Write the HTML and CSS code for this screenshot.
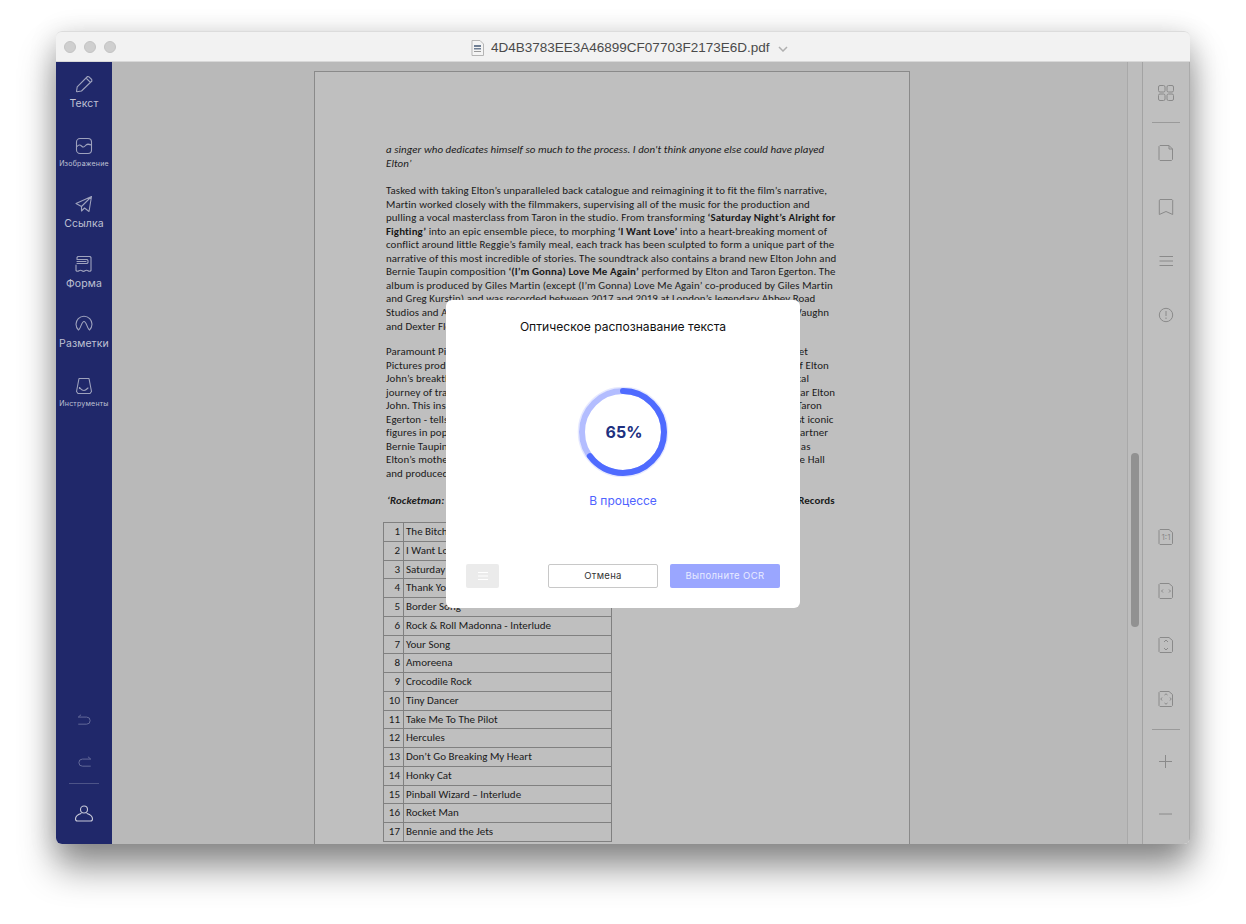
FILE: index.html
```html
<!DOCTYPE html>
<html lang="ru">
<head>
<meta charset="utf-8">
<title>OCR</title>
<link rel="stylesheet" href="styles.css">
</head>
<body>
<div class="window">
  <header class="titlebar">
    <div class="lights"><i></i><i></i><i></i></div>
    <div class="doc-title">
      <svg class="doc-icon" width="13" height="16" viewBox="0 0 13 16"><path d="M1 .5h8l3.500 3.500v11.500h-11.500z" fill="#f4f4f4" stroke="#b5b5b5"/><path d="M3 5h7v2h-7zM3 8h7v1.500h-7z" fill="#6f7f94"/><path d="M3 11h7v1h-7z" fill="#9a9a9a"/></svg>
      <span>4D4B3783EE3A46899CF07703F2173E6D.pdf</span>
      <svg class="chev" width="10" height="6" viewBox="0 0 10 6"><path d="M1 1l4 4 4-4" fill="none" stroke="#b0b0b0" stroke-width="1.500"/></svg>
    </div>
  </header>
  <div class="body">
    <nav class="sidebar">
      <div class="tools">
        <div class="tool"><svg width="20" height="20" viewBox="0 0 20 20"><path d="M2.500 17.500l.7-4.700L13.500 2.500l1.500.3 2.700 2.700.2 1.500L7.500 17l-4.500.7zM12 4l4.200 4.200" class="ic"/></svg><span>Текст</span></div>
        <div class="tool small"><svg width="20" height="20" viewBox="0 0 20 20"><rect x="2.500" y="2.500" width="15" height="15" rx="3.500" class="ic"/><path d="M2.500 11c2-2.500 3.500-2.500 5-1s2.500 1.500 4-.5 3-1.500 6-.5" class="ic"/></svg><span>Изображение</span></div>
        <div class="tool"><svg width="20" height="20" viewBox="0 0 20 20"><path d="M2 9.500L17.500 2.500 15 17.500 10.500 14 7.500 17V12.500zM7.500 12.500L17.500 2.500" class="ic"/></svg><span>Ссылка</span></div>
        <div class="tool"><svg width="20" height="20" viewBox="0 0 20 20"><path d="M3 5V3.500l1-1h12l1 1V16.500c-1 1-2 1-3 .3-1-.7-2-.7-3 0s-2 .7-3 0-2-.7-3 0-2 .7-3-.3V11M3 5.500h10l1 1v2l-1 1H3M3 7.500h9" class="ic"/></svg><span>Форма</span></div>
        <div class="tool"><svg width="20" height="20" viewBox="0 0 20 20"><path d="M4.500 16A8 8 0 1 1 15.500 16" class="ic"/><path d="M5 15.500c2-1.500 2.500-8 5-8s3 6.500 5 8" class="ic"/></svg><span>Разметки</span></div>
        <div class="tool small"><svg width="20" height="20" viewBox="0 0 20 20"><path d="M5 2.500h10l2.500 13-1.500 2H4l-1.500-2zM5.500 11.500c1.500 1.500 2 3 4.500 3 1.500 0 2.500-1 4-2.500M5.500 11.500v1" class="ic"/></svg><span>Инструменты</span></div>
      </div>
      <div class="side-bottom">
        <svg class="undo" width="15" height="12" viewBox="0 0 18 14"><path d="M4.500 1L1.500 3.500h10a3.500 3.500 0 0 1 0 8.500H2" class="ic dim"/></svg>
        <svg class="redo" width="15" height="12" viewBox="0 0 18 14"><path d="M13.500 1L16.500 3.500h-10a3.500 3.500 0 0 0 0 8.500H16" class="ic dim"/></svg>
        <hr class="side-rule">
        <svg class="user" width="20" height="20" viewBox="0 0 20 20"><circle cx="10" cy="5.500" r="3.500" class="ic bright"/><path d="M7 9.500c-3 1-5.500 3-5.500 5.500 0 1.500 1 2 2 2h13c1 0 2-.5 2-2 0-2.500-2.500-4.500-5.500-5.500" class="ic bright"/></svg>
      </div>
    </nav>
    <main class="viewer">
      <article class="page">
        <p class="it">a singer who dedicates himself so much to the process. I don't think anyone else could have played<br>Elton’</p>
        <p class="lead">Tasked with taking Elton’s unparalleled back catalogue and reimagining it to fit the film’s narrative,<br>Martin worked closely with the filmmakers, supervising all of the music for the production and<br>pulling a vocal masterclass from Taron in the studio. From transforming <b>‘Saturday Night’s Alright for<br>Fighting’</b> into an epic ensemble piece, to morphing <b>‘I Want Love’</b> into a heart-breaking moment of<br>conflict around little Reggie’s family meal, each track has been sculpted to form a unique part of the<br>narrative of this most incredible of stories. The soundtrack also contains a brand new Elton John and<br>Bernie Taupin composition <b>‘(I’m Gonna) Love Me Again’</b> performed by Elton and Taron Egerton. The<br>album is produced by Giles Martin (except (I’m Gonna) Love Me Again’ co-produced by Giles Martin<br>and Greg Kurstin) and was recorded between 2017 and 2019 at London’s legendary Abbey Road<br>Studios and AIR Studios with some additional orchestrations by Matt Dunkley and by Steve Vaughn<br>and Dexter Fletcher.</p>
        <p>Paramount Pictures presents, in association with New Regency Films, Marv Films and a Rocket<br>Pictures production, Rocketman is an epic musical fantasy on the uncensored human story of Elton<br>John’s breakthrough years, directed by Dexter Fletcher. The film follows the fantastical musical<br>journey of transformation from shy piano prodigy Reginald Dwight into international superstar Elton<br>John. This inspirational story, set to Elton John’s most beloved songs and performed by star Taron<br>Egerton - tells the astonishing story of how a small-town boy became one of the world’s most iconic<br>figures in pop culture. Rocketman also stars Jamie Bell as Elton’s longtime lyricist &amp; writing partner<br>Bernie Taupin, Richard Madden as Elton’s first manager, John Reid, and Bryce Dallas Howard as<br>Elton’s mother Sheila Eileen. Rocketman is directed by Dexter Fletcher and it is written by Lee Hall<br>and produced by Matthew Vaughn.</p>
        <p class="album"><b><i>‘Rocketman: Music from the Motion Picture’</i> – new soundtrack track listing on Virgin EMI Records</b></p>
        <table class="tracks">
          <tr><td>1</td><td>The Bitch Is Back</td></tr>
          <tr><td>2</td><td>I Want Love</td></tr>
          <tr><td>3</td><td>Saturday Night’s Alright</td></tr>
          <tr><td>4</td><td>Thank You For All Your Loving</td></tr>
          <tr><td>5</td><td>Border Song</td></tr>
          <tr><td>6</td><td>Rock &amp; Roll Madonna - Interlude</td></tr>
          <tr><td>7</td><td>Your Song</td></tr>
          <tr><td>8</td><td>Amoreena</td></tr>
          <tr><td>9</td><td>Crocodile Rock</td></tr>
          <tr><td>10</td><td>Tiny Dancer</td></tr>
          <tr><td>11</td><td>Take Me To The Pilot</td></tr>
          <tr><td>12</td><td>Hercules</td></tr>
          <tr><td>13</td><td>Don’t Go Breaking My Heart</td></tr>
          <tr><td>14</td><td>Honky Cat</td></tr>
          <tr><td>15</td><td>Pinball Wizard – Interlude</td></tr>
          <tr><td>16</td><td>Rocket Man</td></tr>
          <tr><td>17</td><td>Bennie and the Jets</td></tr>
        </table>
      </article>
    </main>
    <div class="gutter"><div class="thumb"></div></div>
    <aside class="rail">
      <svg width="18" height="18" viewBox="0 0 18 18"><rect x="1.500" y="1.500" width="6.500" height="6.500" rx="1.500" class="rc"/><rect x="10" y="1.500" width="6.500" height="6.500" rx="1.500" class="rc"/><rect x="1.500" y="10" width="6.500" height="6.500" rx="1.500" class="rc"/><rect x="10" y="10" width="6.500" height="6.500" rx="1.500" class="rc"/></svg>
      <hr class="rail-rule top">
      <svg class="r1" width="16" height="18" viewBox="0 0 16 18"><path d="M2 1.500h9l3.500 3.500v10.500l-1 1H2l-1-1V2.500zM11 1.500V5h3.500" class="rc"/></svg>
      <svg class="r2" width="16" height="18" viewBox="0 0 16 18"><path d="M2 1.500h12l.7.7V16.500L8 13.500 1.300 16.500V2.200z" class="rc"/></svg>
      <svg class="r3" width="16" height="12" viewBox="0 0 16 12"><path d="M1.500 1.500h13.500M1.500 6h13.500M1.500 10.500h13.500" class="rc"/></svg>
      <svg width="16" height="16" viewBox="0 0 16 16"><circle cx="8" cy="8" r="6.700" class="rc"/><path d="M8 4v5M8 10.500v1.500" class="rc"/></svg>
      <div class="rail-low">
        <svg width="16" height="18" viewBox="0 0 16 18"><path d="M2 1.500h9l3.500 3v11l-1 1H2l-1-1V2.500z" class="rc"/><text x="8" y="12" text-anchor="middle" class="ratio">1:1</text></svg>
        <svg width="16" height="18" viewBox="0 0 16 18"><path d="M2 1.500h9l3.500 3v11l-1 1H2l-1-1V2.500z" class="rc"/><path d="M5 7.500L3.500 9 5 10.500M11 7.500L12.500 9 11 10.500" class="rc"/></svg>
        <svg width="16" height="18" viewBox="0 0 16 18"><path d="M2 1.500h9l3.500 3v11l-1 1H2l-1-1V2.500z" class="rc"/><path d="M6 6l2-2 2 2M6 12l2 2 2-2" class="rc"/></svg>
        <svg width="16" height="18" viewBox="0 0 16 18"><path d="M2 1.500h9l3.500 3v11l-1 1H2l-1-1V2.500z" class="rc"/><path d="M6.500 5L8 3.800 9.500 5M6.500 13L8 14.200 9.500 13M4 7.500L2.800 9 4 10.500M12 7.500L13.200 9 12 10.500" class="rc"/></svg>
      </div>
      <hr class="rail-rule bottom">
      <svg class="plus" width="14" height="14" viewBox="0 0 14 14"><path d="M0 6.500h13M6.500 0v13" class="rc"/></svg>
      <svg class="minus" width="14" height="2" viewBox="0 0 14 2"><path d="M0 1h13" class="rc"/></svg>
    </aside>
    <section class="dialog">
      <h2>Оптическое распознавание текста</h2>
      <div class="ring">
        <svg width="92" height="92" viewBox="0 0 92 92">
          <circle cx="46" cy="46" r="44.500" fill="none" stroke="#e6e9ff" stroke-width="1.500"/>
          <circle cx="46" cy="46" r="41" fill="none" stroke="#b3bdff" stroke-width="6"/>
          <circle cx="46" cy="46" r="41" fill="none" stroke="#4f6bff" stroke-width="6" stroke-linecap="round" pathLength="100" stroke-dasharray="65 100" transform="rotate(-90 46 46)"/>
        </svg>
        <strong>65%</strong>
      </div>
      <div class="status">В процессе</div>
      <div class="actions">
        <button class="menu-btn" type="button"><svg width="10" height="8" viewBox="0 0 10 8"><path d="M0 .5h10M0 4h10M0 7.500h10" stroke="#fff" fill="none"/></svg></button>
        <button class="cancel" type="button">Отмена</button>
        <button class="run" type="button">Выполните OCR</button>
      </div>
    </section>
  </div>
</div>
</body>
</html>
```
FILE: styles.css
```css
* { box-sizing: border-box; }
html, body { margin: 0; height: 100%; background: #fff; overflow: hidden; }
body { padding: 31px 56px 0; font-family: Inter, "Noto Sans", sans-serif; }
.window {
  width: 1134px; height: 813px; border-radius: 6px; display: flex; flex-direction: column;
  box-shadow: 0 24px 36px rgba(0,0,0,.42), 0 4px 28px rgba(0,0,0,.16);
  position: relative;
}
.titlebar {
  height: 31px; flex: none; background: #f2f2f2; border-radius: 6px 6px 0 0; border-top: 1px solid #dcdcdc; border-bottom: 1px solid #d8d8d8;
  display: flex; align-items: center; position: relative;
}
.lights { display: flex; gap: 8px; padding-left: 8px; }
.lights i { width: 12px; height: 12px; border-radius: 50%; background: #cfcfcf; border: 1px solid #c4c4c4; }
.doc-title {
  position: absolute; left: 415px; top: 1px; height: 29px; display: flex; align-items: center; gap: 7px;
  font: 13.500px "Liberation Sans", Arial, sans-serif; color: #4a4a4a;
}
.chev { margin-left: 2px; margin-top: 2px; }
.body { flex: 1; display: flex; min-height: 0; position: relative; border-radius: 0 0 6px 6px; overflow: hidden; }
.sidebar { width: 56px; flex: none; background: #20286a; display: flex; flex-direction: column; justify-content: space-between; }
.tools { padding-top: 11px; display: flex; flex-direction: column; }
.tool { height: 60px; display: flex; flex-direction: column; align-items: center; color: #bfc1d3; font-size: 10.500px; line-height: 14px; }
.tool svg { margin: 1px 0 3px; flex: none; }
.tool span { letter-spacing: .1px; white-space: nowrap; }
.tool.small { font-size: 7px; }
.tool.small svg { margin: 3px 0 1px; }
.tool.small span { letter-spacing: .22px; }
.ic { fill: none; stroke: #9ea2bd; stroke-width: 1.100; stroke-linejoin: round; stroke-linecap: round; }
.ic.dim { stroke: #686f9c; }
.ic.bright { stroke: #c6c8d8; }
.side-bottom { display: flex; flex-direction: column; align-items: center; padding-bottom: 20px; }
.undo { margin-bottom: 30px; }
.redo { margin-bottom: 15px; }
.side-rule { width: 30px; border: 0; border-top: 1px solid #4d5488; margin: 0 0 20px; }
.viewer { flex: 1; background: #b9b9b9; overflow: hidden; padding-top: 9px; min-width: 0; }
.page {
  width: 596px; height: 900px; margin-left: 202px; background: #bfbfbf; border: 1px solid #8a8a8a;
  padding: 71px 0 0 71px; font: 10.900px/13.550px Carlito, Lato, "Open Sans", sans-serif; color: #1a1a1a; letter-spacing: .08px;
}
.page p { margin: 0 0 13px; white-space: nowrap; }
.page b { letter-spacing: .1px; }
.page p.it { font-style: italic; margin-bottom: 14px; letter-spacing: .06px; }
.page p.lead { margin-bottom: 12px; }
.page p.album { margin: 0 0 15px; padding-left: 1px; }
.tracks { border-collapse: collapse; width: 229px; margin-left: -3px; font-size: 11px; line-height: 12px; table-layout: fixed; letter-spacing: 0; }
.tracks td { border: 1px solid #808080; height: 18.750px; padding: 0 2px; white-space: nowrap; overflow: hidden; color: #1a1a1a; }
.tracks td:first-child { width: 20px; text-align: right; padding-right: 3px; }
.gutter { width: 16px; flex: none; background: #bdbdbd; border-left: 1px solid #a9a9a9; border-right: 1px solid #a3a3a3; position: relative; }
.thumb { position: absolute; left: 3px; top: 391px; width: 8px; height: 174px; border-radius: 4px; background: #919191; }
.rail { width: 47px; flex: none; background: #bfbfbf; display: flex; flex-direction: column; align-items: center; padding-top: 22px; border-right: 1px solid #ababab; }
.rc { fill: none; stroke: #8a8a8a; stroke-width: 1; }
.ratio { font: 8px Inter, sans-serif; fill: #8a8a8a; }
.rail-rule { width: 28px; border: 0; border-top: 1px solid #9a9a9a; flex: none; }
.rail-rule.top { margin: 20px 0 21px; }
.r1 { margin-bottom: 36px; }
.r2 { margin-bottom: 39px; }
.r3 { margin-bottom: 40px; }
.rail-low { margin-top: 205px; display: flex; flex-direction: column; gap: 36px; align-items: center; }
.rail-rule.bottom { margin: 21px 0 25px; }
.plus { margin-bottom: 44px; }
.dialog {
  position: absolute; left: 390px; top: 238px; width: 354px; height: 308px; background: #fff; border-radius: 6px;
  display: flex; flex-direction: column; align-items: center; padding: 19px 20px 20px;
}
.dialog h2 { margin: 0; font-size: 12.100px; line-height: 16px; font-weight: 400; color: #111; }
.ring { position: relative; width: 92px; height: 92px; margin-top: 51px; }
.ring svg { display: block; }
.ring strong { position: absolute; inset: 0; padding-left: 2px; display: flex; align-items: center; justify-content: center; font-size: 16px; font-weight: 700; color: #20307f; }
.status { margin-top: 15px; font-size: 12px; line-height: 16px; color: #4f63ff; }
.actions { margin-top: auto; width: 100%; display: flex; align-items: center; }
.actions button { height: 24px; font: 9.500px Inter, sans-serif; letter-spacing: .3px; border-radius: 2px; padding: 0 0 1px; }
.menu-btn { width: 33px; background: #ebebeb; border: 0; display: flex; align-items: center; justify-content: center; margin-right: 49px; }
.cancel { width: 110px; background: #fff; border: 1px solid #c8c8c8; color: #333; margin-right: 12px; }
.actions .run { width: 110px; background: #9aa6ff; border: 0; color: #e8ebff; letter-spacing: .4px; }
```
